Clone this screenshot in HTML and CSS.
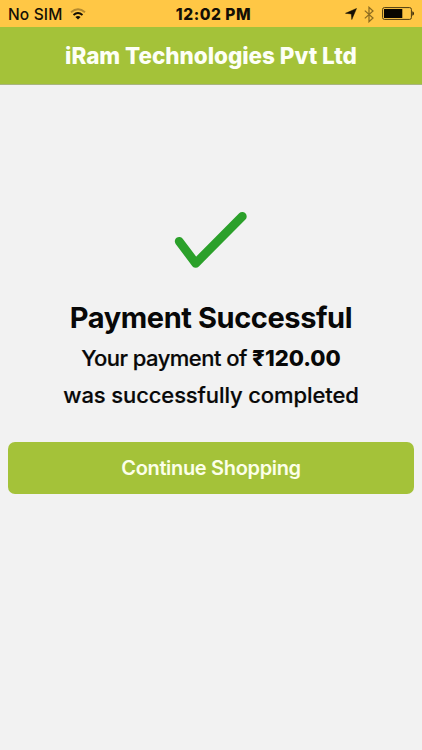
FILE: index.html
```html
<!DOCTYPE html>
<html lang="en">
<head>
<meta charset="utf-8">
<title>Payment Successful</title>
<link rel="stylesheet" href="styles.css">
</head>
<body>
<div class="status">
  <div class="carrier"><span>No SIM</span>
    <svg class="wifi" width="16" height="12" viewBox="0 0 16 12" fill="none" stroke-width="1.9">
      <path d="M1 4.3Q8-1.6 15 4.3" stroke="#b58a2e"/>
      <path d="M3.5 7Q8 3.2 12.5 7" stroke="#140f05"/>
      <path d="M5.4 9Q8 7 10.6 9L8 11.6Z" fill="#140f05"/>
    </svg>
  </div>
  <div class="time">12:02 PM</div>
  <div class="indicators">
    <svg width="12" height="12" viewBox="0 0 12 12"><path d="M11.5.5 6.8 11.5 6.3 5.9.5 5.3Z" fill="#140f05" stroke="#140f05" stroke-width=".5"/></svg>
    <svg class="bluetooth" width="10" height="17" viewBox="0 0 10 17"><path d="M.8 4.6 9 12 5 15.7V1.3L9 5 .8 12.4" fill="none" stroke="#8d6c20" stroke-width="1.25"/></svg>
    <svg class="battery" width="33" height="14" viewBox="0 0 33 14"><rect x=".6" y=".6" width="28.8" height="11.8" rx="1.8" fill="none" stroke="#4b390f"/><rect x="2" y="2" width="18.3" height="9" fill="#080600"/><path d="M30.3 4.2q1.7.4 1.7 2.3t-1.7 2.3z" fill="#33270b"/></svg>
  </div>
</div>
<header class="header"><h1>iRam Technologies Pvt Ltd</h1></header>
<main class="content">
  <svg class="check" width="76" height="60" viewBox="0 0 76 60"><path d="M6.2 31.3 22.7 53.3M22.7 53.3 69.3 6.4" fill="none" stroke="#2ba02a" stroke-width="8.8" stroke-linecap="round"/></svg>
  <h2>Payment Successful</h2>
  <p class="amount">Your payment of <strong>₹120.00</strong></p>
  <p class="completed">was successfully completed</p>
  <button class="continue" type="button">Continue Shopping</button>
</main>
</body>
</html>
```
FILE: styles.css
```css
* { box-sizing: border-box; }
body {
  margin: 0;
  height: 750px;
  background: #f2f2f2;
  color: #080808;
  font-family: Inter, "Liberation Sans", sans-serif;
  overflow: hidden;
}
.status {
  height: 27px;
  padding: 0 7px 0 8px;
  background: #ffc745;
  color: #140f05;
  display: grid;
  grid-template-columns: 1fr auto 1fr;
  align-items: center;
  font-size: 15.5px;
  line-height: 27px;
}
.carrier { display: flex; align-items: center; gap: 7px; font-weight: 500; letter-spacing: .15px; white-space: nowrap; }
.time { font-weight: 800; letter-spacing: .55px; padding-left: 4px; padding-top: 1px; }
.indicators { display: flex; align-items: center; justify-content: flex-end; }
.bluetooth { margin-left: 7px; }
.battery { margin-left: 8px; }
.header {
  height: 58px;
  background: #a4c239;
  border-bottom: 1px solid #a9b57f;
  color: #fdfff6;
  display: flex;
  align-items: center;
  justify-content: center;
}
h1, h2, p { margin: 0; white-space: nowrap; }
h1 { font-size: 22.5px; font-weight: 800; letter-spacing: -.04px; }
.content {
  padding: 125px 8px 0;
  display: flex;
  flex-direction: column;
  align-items: center;
}
.check { display: block; }
h2 { margin-top: 28px; font-size: 29px; line-height: 40px; font-weight: 700; letter-spacing: -.42px; }
.amount { margin-top: 1px; font-size: 22px; line-height: 38px; font-weight: 500; letter-spacing: -.54px; -webkit-text-stroke: .2px #080808; }
.amount strong { font-weight: 800; letter-spacing: 0; -webkit-text-stroke: 0; }
.completed { font-size: 22px; line-height: 36px; font-weight: 500; letter-spacing: -.11px; -webkit-text-stroke: .2px #080808; }
.continue {
  margin-top: 29px;
  width: 100%;
  height: 52px;
  border: 0;
  border-radius: 7px;
  background: #a4c239;
  color: #fcffe9;
  font: 600 20px/52px Inter, "Liberation Sans", sans-serif;
  letter-spacing: -.33px;
  padding: 0;
}
```
